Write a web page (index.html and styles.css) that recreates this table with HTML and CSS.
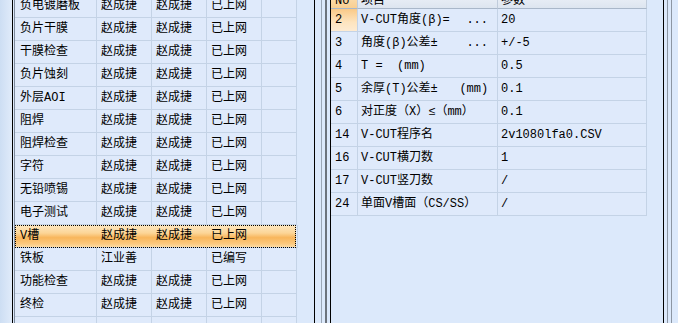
FILE: index.html
```html
<!DOCTYPE html>
<html lang="zh-CN">
<head>
<meta charset="utf-8">
<title>工序</title>
<link rel="stylesheet" href="styles.css">
</head>
<body>
<div class="app">
  <div class="strip"></div>

  <div class="pane left-pane">
    <div class="grid-wrap">
      <div class="grid left-grid">
        <div class="row"><div class="c c1">负电镀磨板</div><div class="c">赵成捷</div><div class="c">赵成捷</div><div class="c">已上网</div><div class="c"></div></div>
        <div class="row"><div class="c c1">负片干膜</div><div class="c">赵成捷</div><div class="c">赵成捷</div><div class="c">已上网</div><div class="c"></div></div>
        <div class="row"><div class="c c1">干膜检查</div><div class="c">赵成捷</div><div class="c">赵成捷</div><div class="c">已上网</div><div class="c"></div></div>
        <div class="row"><div class="c c1">负片蚀刻</div><div class="c">赵成捷</div><div class="c">赵成捷</div><div class="c">已上网</div><div class="c"></div></div>
        <div class="row"><div class="c c1">外层AOI</div><div class="c">赵成捷</div><div class="c">赵成捷</div><div class="c">已上网</div><div class="c"></div></div>
        <div class="row"><div class="c c1">阻焊</div><div class="c">赵成捷</div><div class="c">赵成捷</div><div class="c">已上网</div><div class="c"></div></div>
        <div class="row"><div class="c c1">阻焊检查</div><div class="c">赵成捷</div><div class="c">赵成捷</div><div class="c">已上网</div><div class="c"></div></div>
        <div class="row"><div class="c c1">字符</div><div class="c">赵成捷</div><div class="c">赵成捷</div><div class="c">已上网</div><div class="c"></div></div>
        <div class="row"><div class="c c1">无铅喷锡</div><div class="c">赵成捷</div><div class="c">赵成捷</div><div class="c">已上网</div><div class="c"></div></div>
        <div class="row"><div class="c c1">电子测试</div><div class="c">赵成捷</div><div class="c">赵成捷</div><div class="c">已上网</div><div class="c"></div></div>
        <div class="row selected"><div class="c c1">V槽</div><div class="c">赵成捷</div><div class="c">赵成捷</div><div class="c">已上网</div><div class="c"></div></div>
        <div class="row"><div class="c c1">铁板</div><div class="c">江业善</div><div class="c"></div><div class="c">已编写</div><div class="c"></div></div>
        <div class="row"><div class="c c1">功能检查</div><div class="c">赵成捷</div><div class="c">赵成捷</div><div class="c">已上网</div><div class="c"></div></div>
        <div class="row"><div class="c c1">终检</div><div class="c">赵成捷</div><div class="c">赵成捷</div><div class="c">已上网</div><div class="c"></div></div>
        <div class="row"><div class="c c1"></div><div class="c"></div><div class="c"></div><div class="c"></div><div class="c"></div></div>
      </div>
    </div>
  </div>

  <div class="splitter"><i class="sl thin"></i><i class="sl thick"></i></div>

  <div class="pane right-pane">
    <div class="grid right-grid">
      <div class="rrow head"><div class="c no cur">No</div><div class="c">项目</div><div class="c">参数</div></div>
      <div class="rrow"><div class="c no cur">2</div><div class="c item"><span>V-CUT角度(β)=</span><span class="ell">...</span></div><div class="c">20</div></div>
      <div class="rrow"><div class="c no">3</div><div class="c item"><span>角度(β)公差±</span><span class="ell">...</span></div><div class="c">+/-5</div></div>
      <div class="rrow"><div class="c no">4</div><div class="c item"><span>T =  (mm)</span></div><div class="c">0.5</div></div>
      <div class="rrow"><div class="c no">5</div><div class="c item"><span>余厚(T)公差±   (mm)</span></div><div class="c">0.1</div></div>
      <div class="rrow"><div class="c no">6</div><div class="c item"><span>对正度（X）≤（mm）</span></div><div class="c">0.1</div></div>
      <div class="rrow"><div class="c no">14</div><div class="c item"><span>V-CUT程序名</span></div><div class="c">2v1080lfa0.CSV</div></div>
      <div class="rrow"><div class="c no">16</div><div class="c item"><span>V-CUT横刀数</span></div><div class="c">1</div></div>
      <div class="rrow"><div class="c no">17</div><div class="c item"><span>V-CUT竖刀数</span></div><div class="c">/</div></div>
      <div class="rrow"><div class="c no">24</div><div class="c item"><span>单面V槽面（CS/SS）</span></div><div class="c">/</div></div>
    </div>
  </div>

  <div class="edge"><i class="el"></i><i class="el"></i></div>
</div>
</body>
</html>
```

FILE: styles.css
```css
html, body {
  margin: 0;
  padding: 0;
}
body {
  width: 678px;
  height: 323px;
  overflow: hidden;
  background: #dce9fb;
  font-family: "Liberation Mono", "Noto Sans CJK SC", monospace;
  font-size: 12px;
  color: #000;
}
.app {
  display: flex;
  height: 323px;
  overflow: hidden;
}
.strip {
  width: 12px;
  flex: none;
  background: linear-gradient(to right, #cddef3, #e0ebfa);
}
.pane {
  flex: none;
  height: 323px;
  overflow: hidden;
  border-left: 1px solid #000;
  border-right: 1px solid #000;
  background: #dce9fb;
}
.left-pane {
  padding-left: 1px;
  width: 300px;
}
.grid-wrap {
  height: 323px;
  border-left: 1px solid #7d8a9c;
  overflow: hidden;
}
.left-grid {
  margin-top: -5px;
  width: 282px;
}
.row {
  display: grid;
  grid-template-columns: 82px 55px 55px 55px 35px;
  width: 282px;
  height: 23px;
}
.c {
  box-sizing: border-box;
  height: 23px;
  line-height: 22px;
  border-right: 1px solid #c4d3e6;
  border-bottom: 1px solid #c4d3e6;
  background: #dfeafb;
  padding-left: 4px;
  white-space: pre;
  overflow: hidden;
}
.left-grid .c1 {
  padding-left: 5px;
}
.row.selected {
  width: 281px;
  background: linear-gradient(#fde8c2 0%, #fcd597 35%, #f8b65c 55%, #fbc77c 80%, #fde0ad 100%);
  outline: 1px dotted #000;
  outline-offset: -1px;
}
.row.selected .c {
  background: transparent;
  border-right-color: transparent;
}
.row.selected .c:last-child {
  border-right: 1px solid #c4d3e6;
  margin-right: -1px;
}
.splitter {
  width: 15px;
  flex: none;
  box-sizing: border-box;
  padding-left: 6px;
  display: flex;
  gap: 3px;
  background: #dce9fb;
}
.sl {
  display: block;
  height: 323px;
}
.sl.thin {
  width: 1px;
  background: #9ba7b6;
}
.sl.thick {
  width: 2px;
  background: #6c737c;
}
.right-pane {
  width: 332px;
}
.right-grid {
  margin-top: -12px;
  width: 316px;
}
.rrow {
  display: grid;
  grid-template-columns: 27px 140px 149px;
  height: 23px;
}
.rrow .c {
  padding-left: 3px;
}
.rrow .c.no {
  padding-left: 4px;
}
.rrow.head {
  height: 21px;
}
.rrow.head .c {
  height: 21px;
  line-height: 20px;
  padding-top: 3px;
  background: linear-gradient(#f4f7fb, #dde5f0);
  border-bottom-color: #a9b7c9;
  border-right-color: #c0ccdb;
}
.rrow.head .c.no.cur {
  background: linear-gradient(#fde7c4, #f9cf92);
}
.rrow .c.no.cur {
  background: linear-gradient(to bottom, #f9c987, #fde4bf 60%, #fdebd2);
}
.c.item {
  display: flex;
}
.c.item .ell {
  margin-left: auto;
  padding-right: 9px;
}
.edge {
  width: 14px;
  flex: none;
  box-sizing: border-box;
  padding-left: 3px;
  display: flex;
  gap: 3px;
  background: #dce9fb;
}
.el {
  display: block;
  width: 1px;
  height: 323px;
  background: #8c96a3;
}
```
